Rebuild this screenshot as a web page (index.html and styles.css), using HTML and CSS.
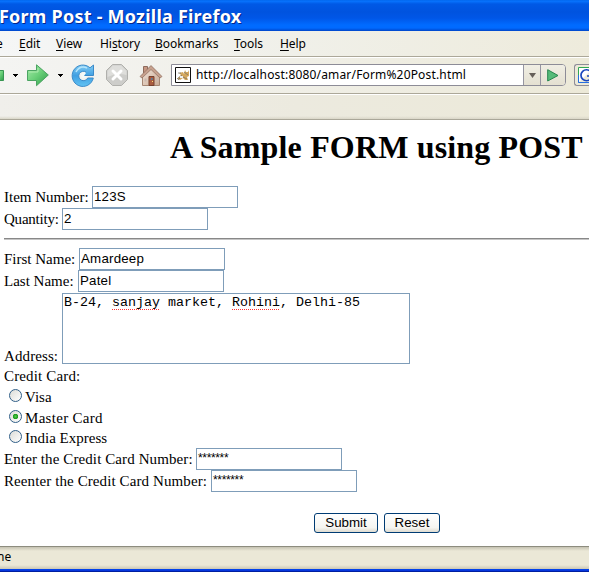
FILE: index.html
```html
<!DOCTYPE html>
<html lang="en">
<head>
<meta charset="utf-8">
<title>Form Post - Mozilla Firefox</title>
<link rel="stylesheet" href="styles.css">
</head>
<body>
<header class="titlebar"><span class="title">Form Post - Mozilla Firefox</span></header>
<nav class="menu">
  <span class="m-file">e</span><span class="m-edit"><u>E</u>dit</span><span class="m-view"><u>V</u>iew</span><span class="m-history">Hi<u>s</u>tory</span><span class="m-bookmarks"><u>B</u>ookmarks</span><span class="m-tools"><u>T</u>ools</span><span class="m-help"><u>H</u>elp</span>
</nav>
<div class="toolbar">
  <svg class="icons" width="171" height="35" viewBox="0 0 171 35">
    <defs>
      <linearGradient id="green" x1="0" y1="0" x2="1" y2="1"><stop offset="0" stop-color="#a5eaa8"/><stop offset=".5" stop-color="#69cf78"/><stop offset="1" stop-color="#2c9b48"/></linearGradient>
      <linearGradient id="blue" x1="0" y1="0" x2="0" y2="1"><stop offset="0" stop-color="#82ccf4"/><stop offset=".5" stop-color="#3f9fe2"/><stop offset="1" stop-color="#62c3f3"/></linearGradient>
      <linearGradient id="wall" x1="0" y1="0" x2="1" y2="1"><stop offset="0" stop-color="#f4e7dc"/><stop offset="1" stop-color="#c9aa95"/></linearGradient>
    </defs>
    <path d="M-4 12.5H3.500V22.500H-4Z" fill="url(#green)" stroke="#389653"/>
    <path d="M13 16h5v1h-1v1h-1v1h-1v-1h-1v-1h-1zM58 16h5v1h-1v1h-1v1h-1v-1h-1v-1h-1z"/>
    <path d="M27.500 12.500H36.500V6.800L48.300 17L36.500 27.700V22.500H27.500Z" fill="url(#green)" stroke="#4ba362"/>
    <path d="M29 14H38V10" fill="none" stroke="#c2f3bd" stroke-opacity=".7"/>
    <path d="M93.500 7V17.500H82.500L86 14A4.700 4.700 0 1 0 87.700 20H93.300A10.700 10.700 0 1 1 90 9.800Z" fill="url(#blue)" stroke="#3c8bc9"/>
    <path d="M76 14Q80 7 87 10" fill="none" stroke="#b6e5fb" stroke-width="1.500"/>
    <path d="M82 20Q80 16 83 14.500Q85 13.500 86 15L84 18H87Q85 21 82 20Z" fill="#f5faf8"/>
    <path d="M112.500 6.500H121.500L127.500 12.500V21.500L121.500 27.500H112.500L106.500 21.500V12.500Z" fill="#cdcdca" stroke="#b0b0ac"/>
    <path d="M113 7.500H121L126.500 13V17Q117 14 107.500 19V13Z" fill="#dededb"/>
    <path d="M113 13L121 21M121 13L113 21" stroke="#fff" stroke-width="3" stroke-linecap="round"/>
    <path d="M143.500 8.500H147.500V15H143.500Z" fill="#c79783" stroke="#8e6b5c"/>
    <path d="M142.500 17L151 8.500L159.500 17V27.500H142.500Z" fill="url(#wall)" stroke="#a58774"/>
    <path d="M140 18.500L151 7.500L162 18.500L160 20L151 11.500L142 20Z" fill="#c7a18e" stroke="#8d6d5d" stroke-width=".7"/>
    <path d="M149 18.500H154V27.500H149Z" fill="#a95c40" stroke="#764230"/>
    <path d="M144.500 20.500h2v3h-2zM156.500 20.500h2v3h-2z" fill="#cbbab0"/><path d="M151 20h1.500v2H151z" fill="#537fa3"/><path d="M152 23h1v1h-1z" fill="#ffe070"/>
  </svg>
  <div class="address">
    <svg width="16" height="16" viewBox="0 0 16 16"><path d="M.5.5h15v15H.5z" fill="#fff" stroke="#111"/><path d="M2 12L6 8L4 6L8 5L9 7L10 3L11 5H13L14 3V9L12 10L13 13H10L8 11L5 13L3 12Z" fill="#d4a75d"/><path d="M2 12L7 8M3 6L6 6M5 11L3 13M8 10L12 12M9 5L13 8" fill="none" stroke="#6f6d65" stroke-width=".7"/><path d="M5 9h3v2H5z" fill="#eee"/></svg>
    <span class="url">http://localhost:8080/amar/Form%20Post.html</span>
    <span class="drop"><svg width="7" height="5"><path d="M0 0H7L3.500 5Z" fill="#655f59"/></svg></span>
    <span class="go"><svg width="12" height="13"><path d="M.7.700L11 6.500L.7 12Z" fill="#55bb79" stroke="#25854d"/></svg></span>
  </div>
  <div class="search"><svg width="16" height="17" viewBox="0 0 16 17"><path d="M.5 15.500V.5H16" fill="#fff" stroke="#32a852"/><path d="M.5 8V15.500H16" fill="none" stroke="#266ee0"/><path d="M12.500 4.500A5.500 5.500 0 1 0 12.500 12V9H9" fill="none" stroke="#1946bd" stroke-width="1.700"/></svg></div>
</div>
<div class="bookmarks"></div>
<main>
  <h1>A Sample FORM using POST</h1>
  <form>
    <div class="row"><label class="l-item">Item Number:</label><div class="field">123S</div></div>
    <div class="row"><label class="l-quantity tight">Quantity:</label><div class="field">2</div></div>
    <hr>
    <div class="row"><label class="l-first">First Name:</label><div class="field">Amardeep</div></div>
    <div class="row"><label class="l-last">Last Name:</label><div class="field">Patel</div></div>
    <div class="address-row"><label class="l-quantity">Address:</label><div class="area">B-24, <span class="spell">sanjay</span> market, <span class="spell">Rohini</span>, Delhi-85</div></div>
    <div class="card-label">Credit Card:</div>
    <div class="choice visa"><i class="radio"></i><span>Visa</span></div>
    <div class="choice master"><i class="radio checked"></i><span>Master Card</span></div>
    <div class="choice india"><i class="radio"></i><span>India Express</span></div>
    <div class="row"><label class="l-card">Enter the Credit Card Number:</label><div class="field password">*******</div></div>
    <div class="row"><label class="l-recard">Reenter the Credit Card Number:</label><div class="field password">*******</div></div>
    <div class="buttons"><button type="button" class="submit">Submit</button><button type="button" class="reset">Reset</button></div>
  </form>
</main>
<footer class="status">ne</footer>
<div class="frame"></div>
</body>
</html>
```
FILE: styles.css
```css
* { box-sizing: border-box; }
body { margin: 0; width: 589px; height: 572px; overflow: hidden; background: #fff; color: #000; font-family: "Liberation Sans", Arial, sans-serif; white-space: nowrap; }
svg { display: block; flex: none; }
.titlebar { height: 31px; background: linear-gradient(#0062e8 0, #0875ff 1px, #0059e6 4px, #0053df 12px, #0056e7 18px, #006bff 25px, #006aff 28px, #0045c9 31px); color: #fff; overflow: hidden; }
.title { display: block; margin-left: -1px; font: bold 18px/33px "Noto Sans", sans-serif; letter-spacing: .23px; text-shadow: 1px 1px #05278c; }
.menu { height: 27px; padding-top: 4px; display: flex; border-bottom: 1px solid #fff; background: linear-gradient(#aca899, #aca899) 0 25px / 100% 1px no-repeat, linear-gradient(90deg, #f5f6f6, #f0f0e9 50%, #eeebdc); font: 12px/18px "Noto Sans", sans-serif; }
.menu span { flex: none; letter-spacing: -.05px; }
.menu u { text-underline-offset: 2px; text-decoration-thickness: 1px; }
.m-file { width: 23px; margin-left: -4px; }
.m-edit { width: 37px; }
.m-view { width: 44px; }
.m-history { width: 55px; }
.m-bookmarks { width: 79px; }
.m-tools { width: 46px; }
.toolbar { height: 37px; display: flex; background: linear-gradient(transparent 35px, #aca899 35px, #aca899 36px, #fff 36px), linear-gradient(90deg, #f4f4f2, #f0efe7 50%, #ece9d8); }
.address { flex: none; margin-top: 6px; width: 395px; height: 22px; display: flex; align-items: center; border: 1px solid #8d8c97; border-radius: 0 4px 4px 0; background: #fff; padding-left: 3px; overflow: hidden; }
.url { flex: none; width: 332px; padding-left: 5px; font: 12px/22px "Noto Sans", sans-serif; letter-spacing: .17px; }
.drop { flex: none; width: 17px; height: 20px; display: grid; place-items: center; border-left: 1px solid #9695a0; background: linear-gradient(#f0eee4, #e4e0d1); }
.go { flex: 1; height: 20px; display: grid; place-items: center; border-left: 1px solid #9695a0; background: linear-gradient(#f0eee4, #e4e0d1); }
.search { flex: none; width: 15px; height: 22px; margin: 6px 0 0 8px; border: 1px solid #8d8c97; border-right: 0; border-radius: 3px 0 0 3px; padding: 2px 0 0 3px; overflow: hidden; background: #ece9d8; }
.bookmarks { height: 25px; border-bottom: 1px solid #aaa799; background: linear-gradient(transparent 21px, #d9d6c8), linear-gradient(90deg, #f0efeb, #eceadf 50%, #ece9d8); }
main { height: 426px; overflow: hidden; padding-left: 4px; font: 16px/20px "Liberation Serif", "Times New Roman", serif; }
h1 { margin: 0; padding: 7px 0 0 166px; height: 66px; font-size: 32px; line-height: 40px; letter-spacing: .16px; }
form { width: 585px; }
.row { height: 22px; display: flex; font-size: 15px; }
.row label { flex: none; line-height: 22px; }
.l-item { width: 88px; }
.l-quantity { width: 58px; }
.row .tight { letter-spacing: -.22px; }
.l-first { width: 75px; }
.l-last { width: 74px; }
.row .l-card { width: 192px; letter-spacing: .1px; }
.row .l-recard { width: 207px; letter-spacing: .1px; }
.field { width: 146px; height: 22px; border: 1px solid #7f9db9; padding-left: 1px; font: 13.333px/19px "Liberation Sans", Arial, sans-serif; letter-spacing: .2px; }
.password { font-size: 12px; line-height: 18px; letter-spacing: -.35px; }
hr { height: 2px; margin: 8px 0; border: 0; background: linear-gradient(#888 1px, #c5c5c5 1px); }
.address-row { height: 73px; display: flex; padding-top: 1px; font-size: 15px; letter-spacing: .1px; }
.address-row label { flex: none; padding-top: 53px; }
.area { width: 348px; height: 71px; border: 1px solid #7f9db9; padding: 1px 0 0 1px; font: 13.33px/15px "Liberation Mono", "Courier New", monospace; letter-spacing: 0; }
.spell { background: repeating-linear-gradient(90deg, #f33 0 1px, transparent 1px 2px) 0 100% / 100% 1px no-repeat; }
.card-label { height: 21px; font-size: 15px; line-height: 23px; letter-spacing: .15px; }
.choice { display: flex; padding-left: 5px; height: 20px; line-height: 22px; font-size: 15px; }
.visa { height: 21px; }
.master { letter-spacing: .3px; }
.india { height: 21px; }
.choice span { margin-left: 3px; }
.radio { width: 13px; height: 13px; margin-top: 3px; border: 1px solid #315f88; border-radius: 50%; background: linear-gradient(135deg, #dcdcd7, #fff); }
.checked { background: radial-gradient(circle, #54ca4e 0, #21a121 2px, #21a121 2.500px, transparent 3px), linear-gradient(135deg, #dcdcd7, #fff); }
.buttons { display: flex; gap: 6px; padding: 21px 0 0 310px; }
button { height: 20px; padding: 0; border: 1px solid #003c74; border-radius: 3px; background: linear-gradient(#fff, #f5f5f1 75%, #dedbd0); color: #000; font: 13.333px/18px "Liberation Sans", Arial, sans-serif; }
.submit { width: 64px; }
.reset { width: 56px; }
.status { height: 23px; background: linear-gradient(#8d8c7e 0 1px, #c5c2b2 1px, #ebe8d7 5px, #ebe8d7 19px, #cbc7b5); font: 12px/22px "Noto Sans", sans-serif; text-indent: -3px; overflow: hidden; }
.frame { height: 3px; background: linear-gradient(#0048f0, #0831d9 2px, #001ea0 2px); }
```
